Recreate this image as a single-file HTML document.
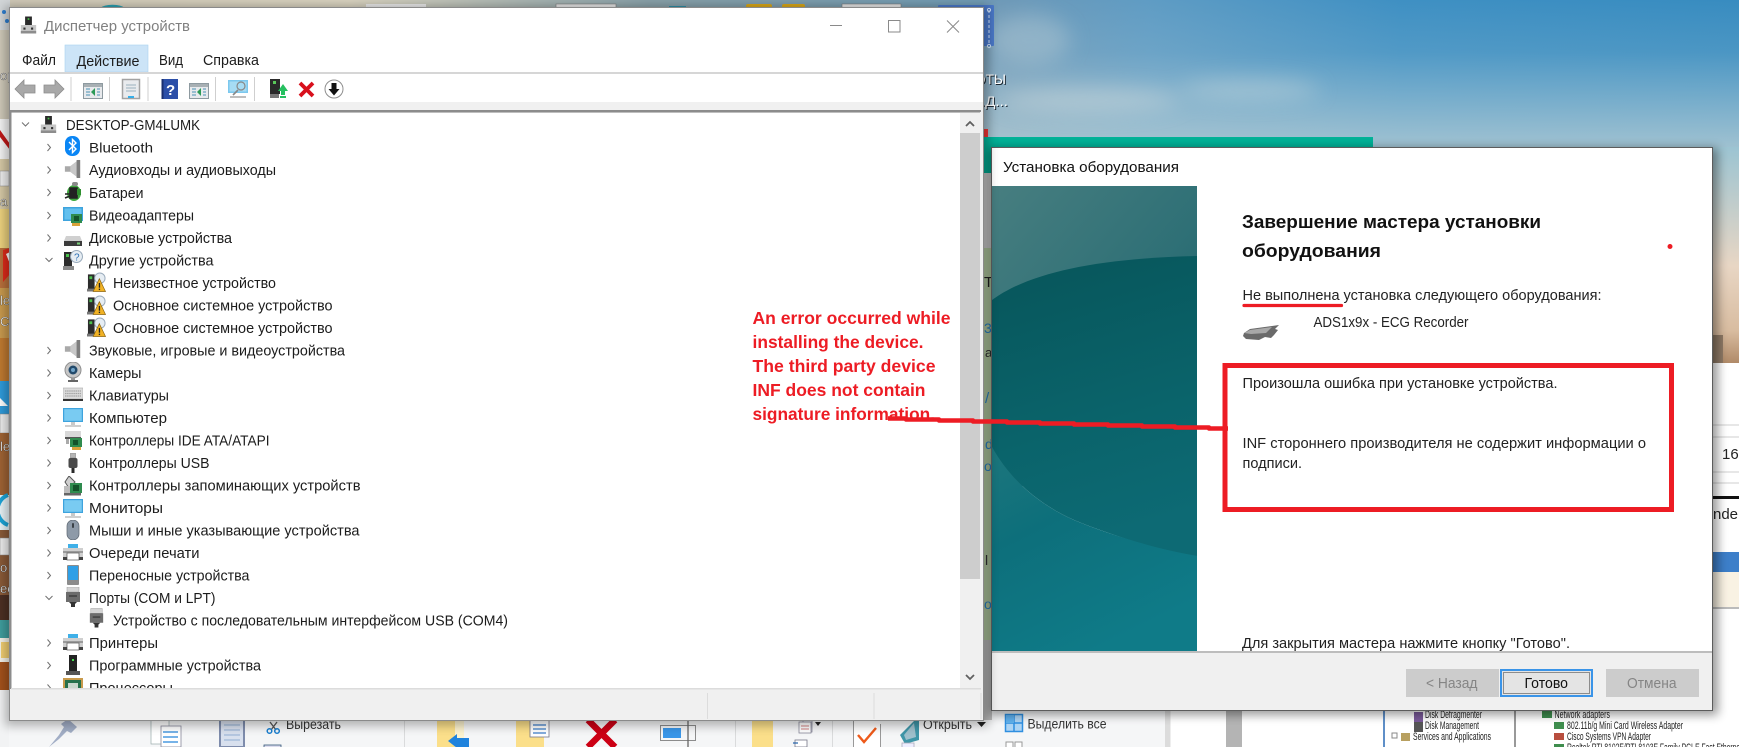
<!DOCTYPE html>
<html lang="ru"><head><meta charset="utf-8"><title>Диспетчер устройств</title>
<style>
html,body{margin:0;padding:0;width:1739px;height:747px;overflow:hidden;background:#fff}
svg{display:block;filter:blur(.3px)}
text{font-family:"Liberation Sans",sans-serif;fill:#1c1c1c;font-size:14.5px;white-space:pre}
.d{font-size:14.5px;fill:#222}
.r{font-family:"Liberation Sans",sans-serif;font-weight:bold;font-size:17.5px;fill:#ed1c24}
.h{font-weight:bold;font-size:18px;fill:#111}
.t{font-size:11px;fill:#222}
.w{font-size:14px;fill:#fff}
.ws{font-size:14px;fill:#1a2630}
</style></head><body>
<svg xmlns="http://www.w3.org/2000/svg" width="1739" height="747" viewBox="0 0 1739 747">
<defs>
<linearGradient id="skyH" x1="0" y1="0" x2="1" y2="0"><stop offset="0" stop-color="#7099b6"/><stop offset=".22" stop-color="#5f9cc4"/><stop offset=".55" stop-color="#3f90c3"/><stop offset="1" stop-color="#388cc0"/></linearGradient>
<linearGradient id="skyV" x1="0" y1="0" x2="0" y2="1"><stop offset="0" stop-color="#b8d0d8" stop-opacity="0"/><stop offset=".35" stop-color="#b8d0d8" stop-opacity=".15"/><stop offset="1" stop-color="#b4ccd4" stop-opacity=".85"/></linearGradient>
<linearGradient id="skyR" x1="0" y1="0" x2="0" y2="1"><stop offset="0" stop-color="#9cc4d2"/><stop offset=".55" stop-color="#e8d6c4"/><stop offset=".85" stop-color="#d8bca0"/><stop offset="1" stop-color="#b08a68"/></linearGradient>
<linearGradient id="topS" x1="0" y1="0" x2="1" y2="0"><stop offset="0" stop-color="#cfc8b6"/><stop offset=".35" stop-color="#d8d2bf"/><stop offset=".65" stop-color="#88a0a8"/><stop offset="1" stop-color="#6e9ab4"/></linearGradient>
<linearGradient id="panel" x1="0" y1="0" x2=".8" y2="1"><stop offset="0" stop-color="#477e80"/><stop offset=".55" stop-color="#2f7076"/><stop offset="1" stop-color="#185f68"/></linearGradient>
<linearGradient id="panelIn" x1="0" y1="0" x2="0.2" y2="1"><stop offset="0" stop-color="#07555a"/><stop offset=".6" stop-color="#0a636a"/><stop offset="1" stop-color="#0d6a74"/></linearGradient>
<linearGradient id="panelBot" x1="0" y1="0" x2=".5" y2="1"><stop offset="0" stop-color="#1d767c"/><stop offset=".4" stop-color="#0d6f7b"/><stop offset="1" stop-color="#0f7b88"/></linearGradient>
<filter id="sh" x="-5%" y="-5%" width="110%" height="110%"><feGaussianBlur stdDeviation="5"/></filter>
<filter id="cl" x="-30%" y="-60%" width="160%" height="220%"><feGaussianBlur stdDeviation="10"/></filter>
<clipPath id="pc"><rect x="992" y="186" width="205" height="465"/></clipPath>
<clipPath id="treeClip"><rect x="11" y="113" width="949" height="575"/></clipPath>

<symbol id="ipc" viewBox="0 0 20 20"><rect x="6" y="0" width="8" height="11" fill="#2a2a2a"/><rect x="9" y="2" width="2" height="2" fill="#4ac04a"/><rect x="1" y="10" width="18" height="10" fill="#c6c6c6"/><rect x="1" y="17" width="18" height="3" fill="#8d8d8d"/><rect x="4" y="13" width="2.5" height="2.5" fill="#333"/><rect x="13" y="13" width="2.5" height="2.5" fill="#333"/></symbol>
<symbol id="ibt" viewBox="0 0 20 20"><rect x="2" y="0" width="15" height="20" rx="7" fill="#0a86f5"/><path d="M6 6l7 7-3.5 3.5V3.500L13 7l-7 7" fill="none" stroke="#fff" stroke-width="1.400"/></symbol>
<symbol id="isp" viewBox="0 0 20 20"><path d="M1 7h6l9-7v20l-9-7H1z" fill="#a9a9a9"/><path d="M7 7l9-7v20l-9-7z" fill="#c8c8c8"/><rect x="14" y="0" width="4" height="20" fill="#7e7e7e"/></symbol>
<symbol id="ibat" viewBox="0 0 20 20"><ellipse cx="11" cy="11" rx="7" ry="8" fill="#3fa83f"/><path d="M2 12h6M2 16l5-2M7 6h7v10H7z" fill="#222" stroke="#222" stroke-width="1.600"/><rect x="9" y="0" width="6" height="4" rx="2" fill="#8a8a8a"/><path d="M14 7h4v6h-4z" fill="#2f8f2f"/></symbol>
<symbol id="idisp" viewBox="0 0 20 20"><rect x="0" y="1" width="20" height="14" fill="#3ea3dd"/><rect x="1.500" y="2.500" width="17" height="11" fill="#63c0ee"/><rect x="8" y="8" width="11" height="9" fill="#2f8b4e"/><rect x="11" y="10" width="5" height="5" fill="#14532a"/><rect x="9" y="17" width="8" height="3" fill="#d9a23a"/></symbol>
<symbol id="idisk" viewBox="0 0 20 20"><path d="M3 9h14l2 5H1z" fill="#d0d0d0"/><rect x="1" y="14" width="18" height="5" fill="#3c3c3c"/><rect x="14" y="15.500" width="3" height="2" fill="#7ad07a"/></symbol>
<symbol id="iother" viewBox="0 0 20 20"><rect x="1" y="2" width="8" height="14" fill="#2c2c2c"/><rect x="3" y="4" width="3" height="3" fill="#49c04c"/><rect x="0" y="16" width="11" height="4" fill="#8a8a8a"/><circle cx="13.500" cy="6.500" r="6" fill="#e6edf3" stroke="#9ab" stroke-width="1"/><text x="11" y="10.500" style="font-size:10px;fill:#2a6fb5">?</text></symbol>
<symbol id="iwarn" viewBox="0 0 20 20"><rect x="1" y="2" width="7" height="16" fill="#2c2c2c"/><rect x="2.500" y="4" width="3" height="3" fill="#49c04c"/><rect x="0" y="17" width="9" height="3" fill="#777"/><circle cx="13.500" cy="6" r="5.500" fill="#e6edf3" stroke="#9ab" stroke-width="1"/><path d="M13 6.500L19.500 20H6.500z" fill="#f1b224" stroke="#8a6410" stroke-width=".7"/><rect x="12.400" y="11" width="1.400" height="5" fill="#222"/><rect x="12.400" y="17" width="1.400" height="1.500" fill="#222"/></symbol>
<symbol id="icam" viewBox="0 0 20 20"><circle cx="10" cy="8" r="8" fill="#c7c7c7" stroke="#8f8f8f"/><circle cx="10" cy="8" r="4.500" fill="#234a6b"/><circle cx="10" cy="8" r="2" fill="#6fa3c8"/><path d="M8 16h4v2H8z" fill="#999"/><rect x="5" y="18" width="10" height="2" fill="#666"/></symbol>
<symbol id="ikb" viewBox="0 0 20 20"><rect x="0" y="3" width="20" height="11" fill="#dcdcdc" stroke="#aaa" stroke-width=".6"/><path d="M2 6h16M2 8.500h16M2 11h16" stroke="#a4a4a4" stroke-width="1.200" stroke-dasharray="1.500 .6"/><rect x="0" y="14" width="20" height="2" fill="#333"/></symbol>
<symbol id="imon" viewBox="0 0 20 20"><rect x="0" y="0" width="20" height="14" fill="#3ea3dd"/><rect x="1.200" y="1.200" width="17.600" height="11.600" fill="#79cbf2"/><rect x="8" y="14" width="4" height="3" fill="#c9c9c9"/><rect x="2" y="17" width="16" height="2" fill="#cfcfcf"/></symbol>
<symbol id="iide" viewBox="0 0 20 20"><path d="M2 0h16v6H2z" fill="#d8d8d8"/><path d="M2 6h16v2H2z" fill="#555"/><rect x="7" y="7" width="12" height="9" fill="#2f8b4e"/><rect x="10" y="9" width="5" height="5" fill="#14532a"/><rect x="9" y="16" width="9" height="3" fill="#d9a23a"/><rect x="3" y="8" width="3" height="5" fill="#aaa"/></symbol>
<symbol id="iusb" viewBox="0 0 20 20"><rect x="7.500" y="0" width="5" height="5" fill="#b5b5b5" stroke="#777" stroke-width=".5"/><rect x="5.500" y="5" width="9" height="10" rx="2" fill="#4a4a4a"/><rect x="8.500" y="15" width="3" height="5" fill="#2a2a2a"/></symbol>
<symbol id="istor" viewBox="0 0 20 20"><path d="M6 0l6 6-6 6-4-6z" fill="#cfcfcf" stroke="#555"/><rect x="1" y="10" width="8" height="8" fill="#bcbcbc"/><rect x="7" y="7" width="12" height="10" fill="#2f8b4e"/><rect x="10" y="9" width="6" height="6" fill="#14532a"/><rect x="1" y="17" width="17" height="2.500" fill="#666"/></symbol>
<symbol id="imouse" viewBox="0 0 20 20"><rect x="4" y="0" width="12" height="20" rx="6" fill="#8e9aa8" stroke="#5c6570" stroke-width=".7"/><rect x="9" y="3" width="2" height="5" rx="1" fill="#3b4148"/></symbol>
<symbol id="iprn" viewBox="0 0 20 20"><rect x="5" y="0" width="10" height="4" fill="#3fb0e8"/><rect x="0" y="4" width="20" height="9" fill="#cfcfcf"/><rect x="0" y="7" width="20" height="2" fill="#9a9a9a"/><rect x="4" y="9" width="12" height="7" fill="#fff" stroke="#555" stroke-width=".7"/><rect x="0" y="13" width="4" height="3" fill="#444"/><rect x="16" y="13" width="4" height="3" fill="#444"/></symbol>
<symbol id="iport" viewBox="0 0 20 20"><rect x="4" y="0" width="12" height="5" fill="#d4d4d4" stroke="#999" stroke-width=".5"/><rect x="3" y="5" width="14" height="10" fill="#6c6c6c"/><path d="M6 9h8" stroke="#333" stroke-width="1.200"/><path d="M6 15h8l-2 2v3H8v-3z" fill="#333"/></symbol>
<symbol id="itab" viewBox="0 0 20 20"><rect x="4" y="0" width="12" height="20" rx="1" fill="#8c8c8c"/><rect x="5" y="1" width="10" height="14" fill="#2f9fe6"/></symbol>
<symbol id="isw" viewBox="0 0 20 20"><rect x="6" y="0" width="8" height="16" fill="#222"/><rect x="9" y="4" width="2" height="2" fill="#45e04f"/><rect x="3" y="16" width="14" height="4" fill="#555"/></symbol>
<symbol id="icpu" viewBox="0 0 20 20"><rect x="0" y="0" width="20" height="20" fill="#c89a4c"/><rect x="2" y="2" width="16" height="16" fill="#26704c"/><rect x="5" y="5" width="10" height="10" fill="#c9d6cc"/></symbol>
<symbol id="iwin" viewBox="0 0 20 16"><rect x=".5" y=".5" width="19" height="15" fill="#e8eaed" stroke="#8e9aa0"/><rect x="1" y="1" width="18" height="3" fill="#a8b0b4"/><path d="M3 6h4M3 9h4M3 12h4M14 6h3M14 9h3M14 12h3" stroke="#7fb0c8" stroke-width="1.500"/><path d="M12 5v8l-4-4z" fill="#2d9a57"/></symbol>
</defs>

<!-- desktop background -->
<rect width="1739" height="747" fill="#fff"/>
<rect x="0" y="0" width="1000" height="10" fill="url(#topS)"/>
<rect x="984" y="0" width="755" height="150" fill="url(#skyH)"/>
<rect x="984" y="0" width="755" height="150" fill="url(#skyV)"/>
<g filter="url(#cl)" opacity=".55">
<ellipse cx="1030" cy="40" rx="40" ry="25" fill="#a8c2d0"/>
<ellipse cx="1090" cy="100" rx="90" ry="12" fill="#c8d6da"/>
<ellipse cx="1250" cy="90" rx="70" ry="10" fill="#bcd2da"/>
</g>
<rect x="1713" y="147" width="26" height="216" fill="url(#skyR)"/>
<rect x="1713" y="335" width="10" height="28" fill="#8f7a66"/>

<!-- top strip leftovers -->
<path d="M100 8a14 6 0 0 1 25 0z" fill="#2a9fb0"/>
<rect x="366" y="4" width="60" height="4" fill="#e8e8e8"/>
<rect x="556" y="4" width="60" height="4" fill="#e4e4e4" stroke="#777" stroke-width=".6"/>
<rect x="669" y="6" width="17" height="3" fill="#2d8fa8"/>
<rect x="746" y="4" width="26" height="4" rx="2" fill="#d8a618"/>
<rect x="782" y="4" width="23" height="4" rx="2" fill="#d8a618"/>
<rect x="842" y="4" width="59" height="4" fill="#e4e4e4" stroke="#777" stroke-width=".6"/>
<rect x="938" y="5" width="56" height="41" rx="1" fill="#4a78c8"/>
<path d="M989 10v34" stroke="#cfe0f8" stroke-width="1" stroke-dasharray="3 2"/>
<circle cx="989" cy="10" r="1.600" fill="none" stroke="#cfe0f8"/><circle cx="989" cy="46" r="1.600" fill="none" stroke="#cfe0f8"/>
<text class="ws" x="976" y="85" textLength="31" lengthAdjust="spacingAndGlyphs">ОТЫ</text>
<text class="w" x="975" y="84" textLength="31" lengthAdjust="spacingAndGlyphs">ОТЫ</text>
<text class="ws" x="982" y="107" textLength="27" lengthAdjust="spacingAndGlyphs">.Д...</text>
<text class="w" x="981" y="106" textLength="27" lengthAdjust="spacingAndGlyphs">.Д...</text>
<rect x="984" y="129" width="4" height="8" fill="#e33"/>

<!-- left strip -->
<rect x="0" y="0" width="10" height="30" fill="#d2d6d8"/>
<circle cx="4" cy="12" r="2" fill="#2f7fd0"/><circle cx="7" cy="21" r="2" fill="#2f7fd0"/>
<rect x="0" y="30" width="10" height="90" fill="#cfc9b9"/>
<text x="0" y="80" style="font-size:13px;fill:#fff;stroke:#222;stroke-width:.3px">op</text>
<rect x="0" y="119" width="10" height="40" fill="#f4f4f4"/>
<path d="M0 130l10 14v6L0 137z" fill="#c01818"/>
<rect x="0" y="159" width="10" height="50" fill="#d6c9a6"/>
<rect x="0" y="171" width="9" height="15" fill="#eee" stroke="#888" stroke-width=".5"/>
<text x="0" y="206" style="font-size:13px;fill:#fff;stroke:#222;stroke-width:.3px">a</text>
<rect x="0" y="209" width="10" height="40" fill="#edd27e"/>
<rect x="0" y="248" width="10" height="40" fill="#b9703c"/>
<path d="M3 250l7-2v26l-7 8z" fill="#e02a1a"/><path d="M6 254l4-2v12z" fill="#fff"/>
<rect x="0" y="288" width="10" height="50" fill="#c99a4e"/>
<text x="0" y="305" style="font-size:13px;fill:#fff;stroke:#222;stroke-width:.3px">le</text>
<text x="0" y="326" style="font-size:13px;fill:#fff;stroke:#222;stroke-width:.3px">Cl</text>
<rect x="0" y="338" width="10" height="44" fill="#c07a30"/>
<rect x="0" y="381" width="10" height="35" fill="#2f9bdb"/>
<path d="M0 398l8 8H0z" fill="#fff"/>
<rect x="0" y="414" width="9" height="19" fill="#eee" stroke="#888" stroke-width=".5"/>
<rect x="0" y="433" width="10" height="62" fill="#a06434"/>
<text x="0" y="451" style="font-size:13px;fill:#fff;stroke:#222;stroke-width:.3px">le</text>
<rect x="0" y="495" width="10" height="35" fill="#e8f4f8"/>
<path d="M8 495a16 16 0 0 0 0 30" fill="none" stroke="#1ca5d8" stroke-width="4"/>
<rect x="0" y="530" width="10" height="65" fill="#8a5a38"/>
<rect x="0" y="538" width="9" height="17" fill="#eee" stroke="#888" stroke-width=".5"/>
<text x="0" y="572" style="font-size:13px;fill:#fff;stroke:#222;stroke-width:.3px">o</text>
<text x="0" y="593" style="font-size:13px;fill:#fff;stroke:#222;stroke-width:.3px">ee</text>
<rect x="0" y="595" width="10" height="25" fill="#4d3024"/>
<rect x="0" y="620" width="10" height="18" fill="#3f9e9e"/>
<rect x="0" y="638" width="10" height="24" fill="#f5f3ea"/>
<rect x="1" y="642" width="8" height="16" fill="#f2cf72"/>
<rect x="0" y="662" width="10" height="28" fill="#a4521c"/>
<rect x="0" y="690" width="10" height="57" fill="#f2f3f4"/>

<!-- bottom ribbon -->
<rect x="9" y="710" width="1156" height="37" fill="#f5f6f7"/>
<rect x="1165" y="710" width="5.500" height="37" fill="#dcdcdc"/>
<rect x="1226" y="710" width="16" height="37" fill="#b4b4b4"/>
<rect x="404" y="720" width="1" height="27" fill="#dadbdc"/><rect x="735" y="720" width="1" height="27" fill="#dadbdc"/><rect x="832" y="720" width="1" height="27" fill="#dadbdc"/>
<!-- pin -->
<path d="M49 747l10-12 5-8-3-3 7-5 9 8-6 6-4-2-8 8z" fill="#a2aec6"/>
<!-- docs -->
<rect x="151" y="720" width="18" height="24" fill="#fff" stroke="#9aa" stroke-width=".7"/>
<rect x="161" y="726" width="20" height="21" fill="#fff" stroke="#889" stroke-width=".8"/>
<path d="M163 732h15M163 737h15M163 742h15" stroke="#4a9ae0" stroke-width="1.400"/>
<!-- clip -->
<rect x="220" y="720" width="24" height="27" fill="#d8e0ee" stroke="#7e8cac" stroke-width="2"/>
<path d="M224 725h16M224 730h16M224 735h16M224 740h16" stroke="#9fb8d8" stroke-width="1.200"/>
<!-- scissors -->
<path d="M270 722l6 8M277 722l-6 8" stroke="#555" stroke-width="1.300" fill="none"/>
<circle cx="269.500" cy="731" r="2.300" fill="none" stroke="#1a7fd0" stroke-width="1.500"/><circle cx="277" cy="731" r="2.300" fill="none" stroke="#1a7fd0" stroke-width="1.500"/>
<text x="286" y="729" style="font-size:14px;fill:#333" textLength="55" lengthAdjust="spacingAndGlyphs">Вырезать</text>
<rect x="264" y="745" width="17" height="4" fill="#dde" stroke="#357" stroke-width=".8"/>
<!-- folder arrow -->
<rect x="437" y="720" width="27" height="27" fill="#fbdf8a"/>
<rect x="455" y="720" width="9" height="27" fill="#fdf3cf"/>
<path d="M448 741l9-7v4h12v10h-12z" fill="#1f83dd"/>
<!-- folder 2 -->
<rect x="516" y="720" width="28" height="27" fill="#fbdf8a"/>
<rect x="530" y="720" width="19" height="17" fill="#fff" stroke="#778" stroke-width=".8"/>
<path d="M533 725h13M533 729h13M533 733h13" stroke="#3a7cc8" stroke-width="1.300"/>
<!-- red X -->
<path d="M588 720l27 27M615 720l-27 27" stroke="#cc0014" stroke-width="6.500"/>
<!-- blue panel -->
<rect x="660.500" y="725.500" width="35" height="15" fill="#f5f6f7" stroke="#8c8c8c"/>
<rect x="663" y="728" width="18" height="10" fill="#3a96e8"/>
<path d="M688 720v27" stroke="#666" stroke-width="1.300"/>
<!-- folder 3 -->
<rect x="752" y="720" width="21" height="27" fill="#fbdf8a"/>
<path d="M794 720h9v12h9v-12" fill="none" stroke="#889" stroke-width=".8"/>
<rect x="799" y="722" width="12" height="11" fill="#fff" stroke="#889" stroke-width=".8"/>
<path d="M801 726h8M801 729h8" stroke="#d08080"/>
<path d="M815 722h6l-3 4z" fill="#222"/>
<rect x="795" y="740" width="12" height="7" fill="#fff" stroke="#778" stroke-width=".8"/>
<path d="M793 743h5" stroke="#2060a8" stroke-width="1.200"/>
<!-- check -->
<rect x="854" y="720" width="26" height="27" fill="#fff"/><path d="M853.500 720v27M880.500 724v23" stroke="#999" fill="none"/>
<path d="M858 735l6 7 12-14" fill="none" stroke="#ee5a1a" stroke-width="2.400"/>
<!-- book -->
<path d="M900 735l15-15h4v20l-14 4z" fill="#3f96a8"/><path d="M904 735l10-12 2 14-10 3z" fill="#9fc0cc"/>
<text x="923" y="729" style="font-size:14px;fill:#333" textLength="49" lengthAdjust="spacingAndGlyphs">Открыть</text>
<path d="M977 722h9l-4.500 5z" fill="#222"/>
<rect x="902" y="743" width="12" height="6" fill="#eef" stroke="#aab" stroke-width=".8"/>
<!-- select all -->
<rect x="1005.500" y="714.500" width="17" height="17" fill="#add4f4" stroke="#2f8fe0" stroke-width="1.500"/>
<path d="M1014 714v18M1005 723h18" stroke="#2f8fe0" stroke-width="1.500"/>
<rect x="1006" y="715" width="8" height="8" fill="#5fb0ec"/>
<text x="1027.500" y="728.500" style="font-size:14px;fill:#333" textLength="79" lengthAdjust="spacingAndGlyphs">Выделить все</text>
<rect x="1006" y="742" width="7" height="7" fill="#fff" stroke="#999"/><rect x="1015" y="742" width="7" height="7" fill="#fff" stroke="#999"/>

<!-- MMC tree behind -->
<rect x="1383" y="710" width="2" height="37" fill="#5f8fc8"/>
<rect x="1514" y="710" width="2" height="37" fill="#999"/>
<g style="fill:#222">
<rect x="1414" y="712" width="9" height="10" fill="#7a5a9a"/><rect x="1414" y="722" width="9" height="10" fill="#555"/>
<rect x="1392" y="733" width="5" height="5" fill="#fff" stroke="#888"/><rect x="1401" y="733" width="9" height="8" fill="#b8a060"/>
<text class="t" x="1425" y="718" textLength="57" lengthAdjust="spacingAndGlyphs">Disk Defragmenter</text>
<text class="t" x="1425" y="729" textLength="54" lengthAdjust="spacingAndGlyphs">Disk Management</text>
<text class="t" x="1413" y="740" textLength="78" lengthAdjust="spacingAndGlyphs">Services and Applications</text>
<rect x="1542" y="711" width="10" height="7" fill="#3f8e4e"/>
<text class="t" x="1554.500" y="718" textLength="55.500" lengthAdjust="spacingAndGlyphs">Network adapters</text>
<rect x="1554" y="722" width="10" height="7" fill="#3f8e4e"/>
<text class="t" x="1567" y="729" textLength="116" lengthAdjust="spacingAndGlyphs">802.11b/g Mini Card Wireless Adapter</text>
<rect x="1554" y="733" width="10" height="7" fill="#b84e3e"/>
<text class="t" x="1567" y="740" textLength="84" lengthAdjust="spacingAndGlyphs">Cisco Systems VPN Adapter</text>
<rect x="1554" y="744" width="10" height="3" fill="#3f8e4e"/>
<text class="t" x="1567" y="751" textLength="175" lengthAdjust="spacingAndGlyphs">Realtek RTL8102E/RTL8103E Family PCI-E Fast Ethernet</text>
</g>

<!-- right edge window fragments -->
<rect x="1713" y="363" width="26" height="190" fill="#fff"/>
<path d="M1713 425h26M1713 437h26M1713 472h26M1713 483h26" stroke="#cfcfcf"/>
<rect x="1713" y="496" width="26" height="3" fill="#111"/>
<text x="1722" y="459" style="font-size:15px;fill:#222">16</text>
<text x="1713" y="519" style="font-size:15px;fill:#222">nder</text>
<rect x="1713" y="552" width="26" height="20" fill="#3d7fc9"/>
<rect x="1713" y="572" width="26" height="35" fill="#f9f2e3"/>
<rect x="1713" y="607" width="26" height="2" fill="#bbb"/>

<!-- teal window behind dialog -->
<rect x="984" y="137" width="389" height="12" fill="#02b298"/>
<rect x="984" y="149" width="8" height="24" fill="#02b298"/>
<rect x="984" y="173" width="8" height="75" fill="#d0d0d0"/>
<rect x="984" y="248" width="8" height="392" fill="#b6cea4"/>
<rect x="984" y="640" width="8" height="80" fill="#bfbfbf"/>
<g style="font-size:14px">
<text x="984" y="287" style="font-size:15px;fill:#222">T</text>
<text x="984" y="333" style="font-size:14px;fill:#2a86cc">3</text>
<text x="985" y="357" style="font-size:13px;fill:#333">a</text>
<text x="985" y="403" style="font-size:15px;fill:#2a86cc">/</text>
<text x="985" y="449" style="font-size:14px;fill:#2a86cc">d</text>
<text x="984" y="471" style="font-size:14px;fill:#2a86cc">o</text>
<text x="985" y="565" style="font-size:14px;fill:#333">l</text>
<text x="984" y="609" style="font-size:14px;fill:#2a86cc">o</text>
</g>

<!-- dialog shadow & dialog -->
<rect x="989" y="148" width="729" height="567" fill="#000" opacity=".4" filter="url(#sh)"/>
<rect x="991.500" y="147.500" width="721" height="563" fill="#fff" stroke="#5c5c5c"/>
<text x="1003" y="172" textLength="176" lengthAdjust="spacingAndGlyphs" style="font-size:14.5px;fill:#111">Установка оборудования</text>
<g clip-path="url(#pc)">
<rect x="992" y="186" width="205" height="300" fill="url(#panel)"/>
<path d="M992 300C1030 272 1100 258 1198 256V560C1160 550 1110 535 1074 520 1040 505 1010 480 992 447z" fill="url(#panelIn)"/>
<path d="M992 447C1010 480 1040 505 1074 520 1110 535 1160 550 1198 556V651H992z" fill="url(#panelBot)"/>
</g>
<rect x="992" y="651" width="720" height="2" fill="#bdbdbd"/>
<rect x="992" y="653" width="720" height="57" fill="#f0f0f0"/>

<text class="h" x="1242" y="228" textLength="299" lengthAdjust="spacingAndGlyphs">Завершение мастера установки</text>
<text class="h" x="1242" y="257" textLength="139" lengthAdjust="spacingAndGlyphs">оборудования</text>
<circle cx="1670" cy="246.500" r="2.500" fill="#ed1c24"/>
<text class="d" x="1242.500" y="300" textLength="359" lengthAdjust="spacingAndGlyphs">Не выполнена установка следующего оборудования:</text>
<path d="M1244 305.500H1341.500" stroke="#ed1c24" stroke-width="3.200" stroke-linecap="round"/>
<path d="M1244 333l6-4 22-3 7-1-4 4 3 1-4 5-3 3-6-1-6 3-13-1-3-3z" fill="#6a6a6a"/>
<path d="M1244 333l6-3 22-3-6 6-15 1z" fill="#a8a8a8"/>
<text class="d" x="1313.500" y="327" textLength="155" lengthAdjust="spacingAndGlyphs">ADS1x9x - ECG Recorder</text>
<rect x="1225" y="365.500" width="446.500" height="144" fill="none" stroke="#ed1c24" stroke-width="5"/>
<text class="d" x="1242.500" y="388" textLength="315" lengthAdjust="spacingAndGlyphs">Произошла ошибка при установке устройства.</text>
<text class="d" x="1242.500" y="448" textLength="403.500" lengthAdjust="spacingAndGlyphs">INF стороннего производителя не содержит информации о</text>
<text class="d" x="1242.500" y="468" textLength="59.500" lengthAdjust="spacingAndGlyphs">подписи.</text>
<text class="d" x="1242" y="648" textLength="328" lengthAdjust="spacingAndGlyphs">Для закрытия мастера нажмите кнопку "Готово".</text>

<rect x="1406" y="669" width="93" height="28" fill="#cccccc"/>
<text x="1426" y="688" textLength="51.500" lengthAdjust="spacingAndGlyphs" style="font-size:14.5px;fill:#858585">&lt; Назад</text>
<rect x="1501" y="670" width="91" height="26" fill="#e4e4e4" stroke="#3a94e8" stroke-width="2"/>
<rect x="1503.500" y="672.500" width="86" height="21" fill="none" stroke="#333" stroke-width="1" stroke-dasharray="1 1"/>
<text x="1524.500" y="688" textLength="43.500" lengthAdjust="spacingAndGlyphs" style="font-size:14.5px;fill:#111">Готово</text>
<rect x="1606" y="669" width="93" height="28" fill="#cccccc"/>
<text x="1627" y="688" textLength="49.500" lengthAdjust="spacingAndGlyphs" style="font-size:14.5px;fill:#858585">Отмена</text>

<!-- device manager window -->
<rect x="5" y="6" width="984" height="720" fill="#000" opacity=".28" filter="url(#sh)"/>
<rect x="9" y="7" width="975" height="713" fill="#f0f0f0"/>
<rect x="9.500" y="7.500" width="974" height="713" fill="none" stroke="#8a8a8a"/>
<rect x="10" y="8" width="973" height="64" fill="#fff"/>
<use href="#ipc" x="20" y="15" width="17" height="20"/>
<text x="44" y="31" textLength="146" lengthAdjust="spacingAndGlyphs" style="font-size:15px;fill:#808080">Диспетчер устройств</text>
<path d="M830 25.500h12" stroke="#8a8a8a" stroke-width="1"/>
<rect x="888.500" y="20.500" width="11.500" height="11.500" fill="none" stroke="#8a8a8a"/>
<path d="M947 20.500l12 12M959 20.500l-12 12" stroke="#8a8a8a"/>

<rect x="65" y="45" width="83" height="27" fill="#cce4f7" stroke="#a8d2f0" stroke-width=".6"/>
<text x="22" y="65" textLength="34" lengthAdjust="spacingAndGlyphs">Файл</text>
<text x="76.500" y="66" textLength="63" lengthAdjust="spacingAndGlyphs">Действие</text>
<text x="159" y="65" textLength="24" lengthAdjust="spacingAndGlyphs">Вид</text>
<text x="203" y="65" textLength="56" lengthAdjust="spacingAndGlyphs">Справка</text>
<rect x="10" y="72" width="973" height="2" fill="#d6d6d6"/>
<rect x="10" y="74" width="973" height="28" fill="#fff"/>
<rect x="10" y="102" width="973" height="8" fill="#f0f0f0"/>
<rect x="11" y="110" width="970" height="2.500" fill="#8c8c8c"/>

<!-- toolbar -->
<path d="M15 89l9-9v5h11v8H24v5z" fill="#a8a8a8" stroke="#8c8c8c" stroke-width=".8"/>
<path d="M64 89l-9-9v5H44v8h11v5z" fill="#a8a8a8" stroke="#8c8c8c" stroke-width=".8"/>
<path d="M71 77v24M109.500 77v24M148 77v24M215.500 77v24M254.500 77v24" stroke="#cfcfcf"/>
<use href="#iwin" x="83" y="83" width="20" height="16"/>
<rect x="122.500" y="79.500" width="17" height="19" fill="#e9ebee" stroke="#a3a3a3" stroke-width="1.500"/>
<path d="M126 85h10M126 88h10M126 91h10" stroke="#9ab0bd"/><rect x="128" y="96" width="6" height="2" fill="#35aee8"/>
<rect x="161.500" y="79" width="16.500" height="20" fill="#2c4fa8"/><rect x="161.500" y="79" width="2" height="20" fill="#1a2f70"/>
<text x="166" y="95" style="font-size:15px;font-weight:bold;fill:#fff">?</text>
<use href="#iwin" x="189" y="83" width="20" height="16"/>
<rect x="228" y="80" width="20" height="13" fill="#7cc8ee"/><rect x="229.500" y="81.500" width="17" height="10" fill="#a6dcf4"/>
<circle cx="241" cy="86" r="4" fill="none" stroke="#888" stroke-width="1.200"/><path d="M238 90l-5 5" stroke="#888" stroke-width="1.600"/><path d="M230 97h16" stroke="#a8a8a8" stroke-width="1.500"/>
<rect x="270" y="79" width="10" height="15" fill="#2a2a2a"/><rect x="273" y="81" width="3" height="3" fill="#5ac85a"/><rect x="270" y="94" width="9" height="4" fill="#777"/>
<path d="M283 84l5 7h-3v4h-4v-4h-3z" fill="#26c060"/><rect x="280" y="96" width="6" height="2" fill="#26c060"/>
<path d="M300 83l13 13M313 83l-13 13" stroke="#d8101c" stroke-width="3.800"/>
<circle cx="334" cy="89" r="9" fill="#fff" stroke="#8f8f8f" stroke-width="1"/>
<path d="M331.500 83h5v6h3l-5.500 6.500L328.500 89h3z" fill="#111"/>

<!-- tree pane -->
<rect x="11" y="113" width="970" height="575" fill="#fff"/>
<rect x="10" y="110" width="1.500" height="579" fill="#8c8c8c"/>
<rect x="960" y="113" width="20" height="575" fill="#f0f0f0"/>
<rect x="960" y="133" width="20" height="446" fill="#cdcdcd"/>
<path d="M966 126l4-4 4 4" fill="none" stroke="#606060" stroke-width="1.800"/>
<path d="M966 675l4 4 4-4" fill="none" stroke="#606060" stroke-width="1.800"/>
<rect x="980" y="112" width="3" height="577" fill="#f0f0f0"/>
<rect x="11" y="688" width="970" height="1.500" fill="#dcdcdc"/>
<path d="M707.500 693v26M874 693v26M981 693v26" stroke="#dcdcdc"/>

<g clip-path="url(#treeClip)">
<g fill="none" stroke="#707070" stroke-width="1">
<path d="M22 122.500l3.500 3.500 3.500-3.500"/>
<path d="M47.500 144l3 3.500-3 3.500M47.500 166.500l3 3.500-3 3.500M47.500 189l3 3.500-3 3.500M47.500 212l3 3.500-3 3.500M47.500 234.500l3 3.500-3 3.500"/>
<path d="M45.500 258l3.500 3.500 3.500-3.500"/>
<path d="M47.500 347l3 3.500-3 3.500M47.500 369.500l3 3.500-3 3.500M47.500 392l3 3.500-3 3.500M47.500 414.500l3 3.500-3 3.500M47.500 437l3 3.500-3 3.500M47.500 459.500l3 3.500-3 3.500M47.500 482l3 3.500-3 3.500M47.500 504.500l3 3.500-3 3.500M47.500 527l3 3.500-3 3.500M47.500 549.500l3 3.500-3 3.500M47.500 572l3 3.500-3 3.500"/>
<path d="M45.500 596l3.500 3.500 3.500-3.500"/>
<path d="M47.500 639.500l3 3.500-3 3.500M47.500 662l3 3.500-3 3.500M47.500 684.500l3 3.500-3 3.500"/>
</g>
<use href="#ipc" x="40" y="115" width="17" height="19"/>
<use href="#ibt" x="63" y="136" width="20" height="20"/>
<use href="#isp" x="64" y="159" width="18" height="20"/>
<use href="#ibat" x="63" y="181" width="20" height="22"/>
<use href="#idisp" x="63" y="206" width="20" height="20"/>
<use href="#idisk" x="63" y="227" width="20" height="20"/>
<use href="#iother" x="63" y="250" width="20" height="20"/>
<use href="#iwarn" x="87" y="272" width="19" height="20"/>
<use href="#iwarn" x="87" y="295" width="19" height="20"/>
<use href="#iwarn" x="87" y="317" width="19" height="20"/>
<use href="#isp" x="64" y="339" width="18" height="20"/>
<use href="#icam" x="63" y="362" width="20" height="20"/>
<use href="#ikb" x="63" y="385" width="20" height="20"/>
<use href="#imon" x="63" y="408" width="20" height="20"/>
<use href="#iide" x="63" y="431" width="20" height="20"/>
<use href="#iusb" x="63" y="453" width="20" height="20"/>
<use href="#istor" x="63" y="476" width="20" height="20"/>
<use href="#imon" x="63" y="499" width="20" height="20"/>
<use href="#imouse" x="63" y="520" width="20" height="20"/>
<use href="#iprn" x="63" y="544" width="20" height="20"/>
<use href="#itab" x="63" y="565" width="20" height="20"/>
<use href="#iport" x="63" y="587" width="20" height="20"/>
<use href="#iport" x="87" y="608" width="19" height="20"/>
<use href="#iprn" x="63" y="634" width="20" height="20"/>
<use href="#isw" x="63" y="655" width="20" height="20"/>
<use href="#icpu" x="63" y="678" width="20" height="20"/>
<text x="66" y="130" textLength="134" lengthAdjust="spacingAndGlyphs">DESKTOP-GM4LUMK</text>
<text x="89" y="152.500" textLength="64" lengthAdjust="spacingAndGlyphs" style="font-size:14px">Bluetooth</text>
<text x="89" y="175" textLength="187" lengthAdjust="spacingAndGlyphs">Аудиовходы и аудиовыходы</text>
<text x="89" y="198" textLength="54.500" lengthAdjust="spacingAndGlyphs">Батареи</text>
<text x="89" y="220.500" textLength="105" lengthAdjust="spacingAndGlyphs">Видеоадаптеры</text>
<text x="89" y="243" textLength="143" lengthAdjust="spacingAndGlyphs">Дисковые устройства</text>
<text x="89" y="265.500" textLength="124.500" lengthAdjust="spacingAndGlyphs">Другие устройства</text>
<text x="113" y="288" textLength="163" lengthAdjust="spacingAndGlyphs">Неизвестное устройство</text>
<text x="113" y="310.500" textLength="219.500" lengthAdjust="spacingAndGlyphs">Основное системное устройство</text>
<text x="113" y="333" textLength="219.500" lengthAdjust="spacingAndGlyphs">Основное системное устройство</text>
<text x="89" y="355.500" textLength="256" lengthAdjust="spacingAndGlyphs">Звуковые, игровые и видеоустройства</text>
<text x="89" y="378" textLength="52.500" lengthAdjust="spacingAndGlyphs">Камеры</text>
<text x="89" y="400.500" textLength="80" lengthAdjust="spacingAndGlyphs">Клавиатуры</text>
<text x="89" y="423" textLength="78" lengthAdjust="spacingAndGlyphs">Компьютер</text>
<text x="89" y="445.500" textLength="180.500" lengthAdjust="spacingAndGlyphs">Контроллеры IDE ATA/ATAPI</text>
<text x="89" y="468" textLength="120.500" lengthAdjust="spacingAndGlyphs">Контроллеры USB</text>
<text x="89" y="490.500" textLength="271.500" lengthAdjust="spacingAndGlyphs">Контроллеры запоминающих устройств</text>
<text x="89" y="513" textLength="74" lengthAdjust="spacingAndGlyphs">Мониторы</text>
<text x="89" y="535.500" textLength="270.500" lengthAdjust="spacingAndGlyphs">Мыши и иные указывающие устройства</text>
<text x="89" y="558" textLength="110.500" lengthAdjust="spacingAndGlyphs">Очереди печати</text>
<text x="89" y="580.500" textLength="160.500" lengthAdjust="spacingAndGlyphs">Переносные устройства</text>
<text x="89" y="603" textLength="126.500" lengthAdjust="spacingAndGlyphs">Порты (COM и LPT)</text>
<text x="113" y="625.500" textLength="395" lengthAdjust="spacingAndGlyphs">Устройство с последовательным интерфейсом USB (COM4)</text>
<text x="89" y="648" textLength="69" lengthAdjust="spacingAndGlyphs">Принтеры</text>
<text x="89" y="670.500" textLength="172" lengthAdjust="spacingAndGlyphs">Программные устройства</text>
<text x="89" y="693" textLength="84" lengthAdjust="spacingAndGlyphs">Процессоры</text>
</g>

<!-- annotations -->
<text class="r" x="752.500" y="324" textLength="198" lengthAdjust="spacingAndGlyphs">An error occurred while</text>
<text class="r" x="752.500" y="348" textLength="171" lengthAdjust="spacingAndGlyphs">installing the device.</text>
<text class="r" x="752.500" y="372" textLength="183" lengthAdjust="spacingAndGlyphs">The third party device</text>
<text class="r" x="752.500" y="396" textLength="173" lengthAdjust="spacingAndGlyphs">INF does not contain</text>
<text class="r" x="752.500" y="420" textLength="182.500" lengthAdjust="spacingAndGlyphs">signature information.</text>
<path d="M888 418.500h18v1h33v1h34v1h34v1h33v1h34v1h34v1h34v1h33v1h34v1h19" fill="none" stroke="#ed1c24" stroke-width="4.500" stroke-linejoin="round"/>
</svg>
</body></html>
